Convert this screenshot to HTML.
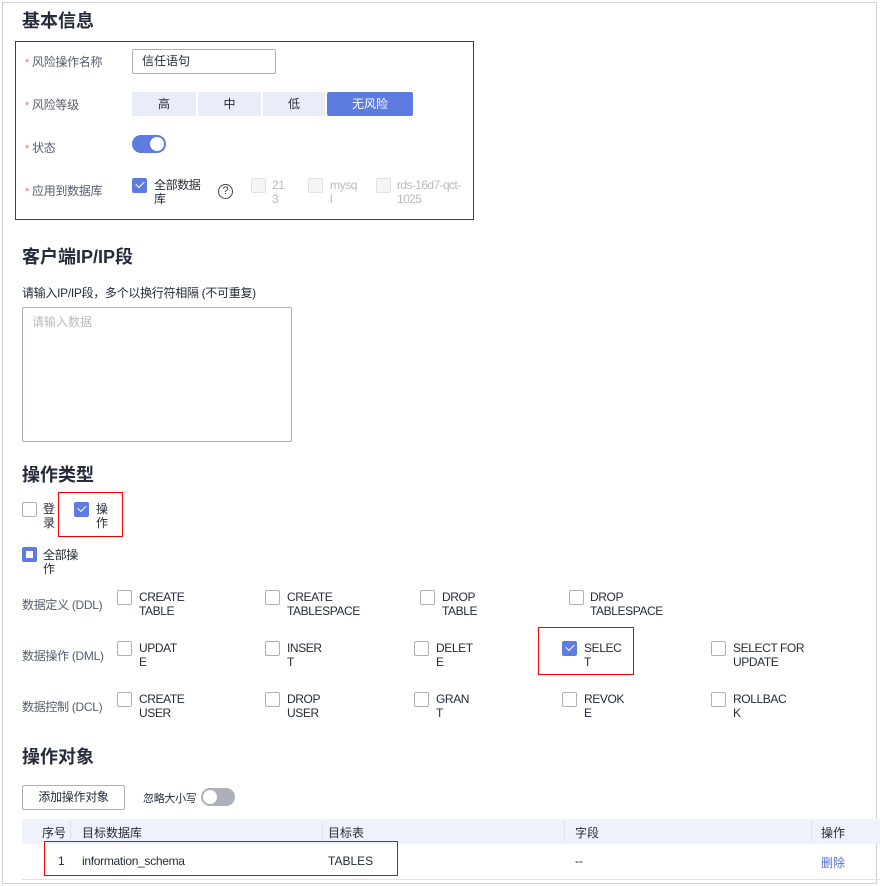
<!DOCTYPE html>
<html><head><meta charset="utf-8"><style>
*{box-sizing:border-box;margin:0;padding:0}
body{width:880px;height:886px;background:#fff;position:relative;overflow:hidden;font-family:"Liberation Sans","Noto Sans CJK SC",sans-serif;color:#252b3a;font-size:12px}
.a{position:absolute;white-space:nowrap}
.h{font-size:18px;font-weight:bold;color:#252b3a}
.lab{color:#575d6c;font-size:12px;letter-spacing:-0.3px}
.star{color:#f66f6a;font-size:11px}
.cb{position:absolute;width:15px;height:15px;border:1px solid #adb0b8;border-radius:2px;background:#fff}
.cb.on{background:#5e7ce0;border-color:#5e7ce0}
.cb.on.chk::after{content:"";position:absolute;left:3px;top:2px;width:7px;height:4px;border-left:1.5px solid #fff;border-bottom:1.5px solid #fff;transform:rotate(-45deg)}
.cb.dis{background:#f5f5f6;border-color:#dfe1e6}
.t2{position:absolute;font-size:12px;line-height:14px;color:#252b3a;letter-spacing:-0.4px;white-space:nowrap}
.red{position:absolute;border:1px solid #e00}
.seg{position:absolute;top:92px;height:24px;background:#e9edfa;text-align:center;line-height:24px;font-size:12px;color:#252b3a}
</style></head><body>
<div class="a" style="left:2px;top:2px;width:875px;height:882px;border:1px solid #d0d0d0"></div>

<div class="a h" style="left:22px;top:7px">基本信息</div>
<div class="red" style="left:15px;top:41px;width:459px;height:179px;border-color:#c00"></div>
<div class="a lab" style="left:25px;top:53px"><span class="star">*</span> 风险操作名称</div>
<div class="a lab" style="left:25px;top:96px"><span class="star">*</span> 风险等级</div>
<div class="a lab" style="left:25px;top:139px"><span class="star">*</span> 状态</div>
<div class="a lab" style="left:25px;top:182px"><span class="star">*</span> 应用到数据库</div>
<div class="a" style="left:132px;top:49px;width:144px;height:25px;border:1px solid #adb0b8;border-radius:2px;padding-left:9px;line-height:23px">信任语句</div>
<div class="seg" style="left:132px;width:64px">高</div>
<div class="seg" style="left:198px;width:63px">中</div>
<div class="seg" style="left:263px;width:62px">低</div>
<div class="seg" style="left:327px;width:86px;background:#5e7ce0;color:#fff;border-radius:2px">无风险</div>
<div class="a" style="left:132px;top:135px;width:34px;height:18px;border-radius:9px;background:#5e7ce0"><div style="position:absolute;right:2px;top:2px;width:14px;height:14px;border-radius:50%;background:#fff"></div></div>
<div class="cb on chk" style="left:132px;top:178px"></div>
<div class="t2" style="left:154px;top:178px">全部数据<br>库</div>
<div class="a" style="left:218px;top:184px;width:15px;height:15px;border:1.3px solid #444;border-radius:50%;text-align:center;font-size:11px;line-height:13px;color:#333">?</div>
<div class="cb dis" style="left:251px;top:178px"></div><div class="t2" style="left:272px;top:178px;color:#b8bac0">21<br>3</div>
<div class="cb dis" style="left:308px;top:178px"></div><div class="t2" style="left:330px;top:178px;color:#b8bac0">mysq<br>l</div>
<div class="cb dis" style="left:376px;top:178px"></div><div class="t2" style="left:397px;top:178px;color:#b8bac0;letter-spacing:-0.6px">rds-16d7-qct-<br>1025</div>

<div class="a h" style="left:22px;top:243px">客户端IP/IP段</div>
<div class="a lab" style="left:22px;top:284px;color:#252b3a">请输入IP/IP段，多个以换行符相隔 (不可重复)</div>
<div class="a" style="left:22px;top:307px;width:270px;height:135px;border:1px solid #adb0b8;border-radius:2px;padding:5px 9px;color:#babbc0">请输入数据</div>

<div class="a h" style="left:22px;top:461px">操作类型</div>
<div class="cb" style="left:22px;top:502px"></div><div class="t2" style="left:43px;top:502px">登<br>录</div>
<div class="red" style="left:58px;top:492px;width:65px;height:45px"></div>
<div class="cb on chk" style="left:74px;top:502px"></div><div class="t2" style="left:96px;top:502px">操<br>作</div>
<div class="cb on" style="left:22px;top:547px"><div style="position:absolute;left:3px;top:3px;width:7px;height:7px;background:#fff"></div></div>
<div class="t2" style="left:43px;top:548px">全部操<br>作</div>

<div class="a lab" style="left:22px;top:596px">数据定义 (DDL)</div>
<div class="a lab" style="left:22px;top:647px">数据操作 (DML)</div>
<div class="a lab" style="left:22px;top:698px">数据控制 (DCL)</div>

<div class="cb" style="left:117px;top:590px"></div><div class="t2" style="left:139px;top:590px">CREATE<br>TABLE</div>
<div class="cb" style="left:265px;top:590px"></div><div class="t2" style="left:287px;top:590px">CREATE<br>TABLESPACE</div>
<div class="cb" style="left:420px;top:590px"></div><div class="t2" style="left:442px;top:590px">DROP<br>TABLE</div>
<div class="cb" style="left:569px;top:590px"></div><div class="t2" style="left:590px;top:590px">DROP<br>TABLESPACE</div>

<div class="cb" style="left:117px;top:641px"></div><div class="t2" style="left:139px;top:641px">UPDAT<br>E</div>
<div class="cb" style="left:265px;top:641px"></div><div class="t2" style="left:287px;top:641px">INSER<br>T</div>
<div class="cb" style="left:414px;top:641px"></div><div class="t2" style="left:436px;top:641px">DELET<br>E</div>
<div class="red" style="left:538px;top:627px;width:96px;height:48px"></div>
<div class="cb on chk" style="left:562px;top:641px"></div><div class="t2" style="left:584px;top:641px">SELEC<br>T</div>
<div class="cb" style="left:711px;top:641px"></div><div class="t2" style="left:733px;top:641px">SELECT FOR<br>UPDATE</div>

<div class="cb" style="left:117px;top:692px"></div><div class="t2" style="left:139px;top:692px">CREATE<br>USER</div>
<div class="cb" style="left:265px;top:692px"></div><div class="t2" style="left:287px;top:692px">DROP<br>USER</div>
<div class="cb" style="left:414px;top:692px"></div><div class="t2" style="left:436px;top:692px">GRAN<br>T</div>
<div class="cb" style="left:562px;top:692px"></div><div class="t2" style="left:584px;top:692px">REVOK<br>E</div>
<div class="cb" style="left:711px;top:692px"></div><div class="t2" style="left:733px;top:692px">ROLLBAC<br>K</div>

<div class="a h" style="left:22px;top:743px">操作对象</div>
<div class="a" style="left:22px;top:785px;width:103px;height:25px;border:1px solid #adb0b8;border-radius:2px;text-align:center;line-height:23px;letter-spacing:-0.3px">添加操作对象</div>
<div class="a" style="left:143px;top:790px;font-size:11px;letter-spacing:-0.3px">忽略大小写</div>
<div class="a" style="left:201px;top:788px;width:34px;height:18px;border-radius:9px;background:#adb0b8"><div style="position:absolute;left:2px;top:2px;width:14px;height:14px;border-radius:50%;background:#fff"></div></div>

<div class="a" style="left:22px;top:819px;width:858px;height:25px;background:#eef2fa"></div>
<div class="a" style="left:70px;top:821px;width:1px;height:21px;background:#dfe1e6"></div>
<div class="a" style="left:322px;top:821px;width:1px;height:21px;background:#dfe1e6"></div>
<div class="a" style="left:564px;top:821px;width:1px;height:21px;background:#dfe1e6"></div>
<div class="a" style="left:811px;top:821px;width:1px;height:21px;background:#dfe1e6"></div>
<div class="a" style="left:42px;top:824px">序号</div>
<div class="a" style="left:82px;top:824px">目标数据库</div>
<div class="a" style="left:328px;top:824px">目标表</div>
<div class="a" style="left:575px;top:824px">字段</div>
<div class="a" style="left:821px;top:824px">操作</div>
<div class="a" style="left:22px;top:879px;width:858px;height:1px;background:#dfe1e6"></div>
<div class="a" style="left:58px;top:854px">1</div>
<div class="a" style="left:82px;top:854px;letter-spacing:-0.3px">information_schema</div>
<div class="a" style="left:328px;top:854px">TABLES</div>
<div class="a" style="left:575px;top:854px">--</div>
<div class="a" style="left:821px;top:854px;color:#526ecc">删除</div>
<div class="red" style="left:44px;top:841px;width:354px;height:35px"></div>
</body></html>
